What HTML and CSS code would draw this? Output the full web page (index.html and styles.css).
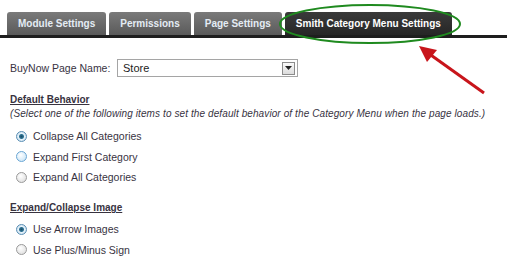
FILE: index.html
```html
<!DOCTYPE html>
<html lang="en">
<head>
  <meta charset="UTF-8" />
  <title>Smith Category Menu Settings</title>
  <link rel="stylesheet" href="styles.css">
</head>
<body>
  <div class="page">
    <ul class="tabs">
      <li class="tab">Module Settings</li>
      <li class="tab">Permissions</li>
      <li class="tab">Page Settings</li>
      <li class="tab active">Smith Category Menu Settings</li>
    </ul>

    <div class="settings">
      <div class="field">
        <label for="buyNowPage">BuyNow Page Name:</label>
        <div class="select" id="buyNowPage">
          <span>Store</span>
          <span class="select-btn"><svg width="7" height="4" viewBox="0 0 7 4"><path d="M0 0h7L3.5 4z" fill="#222"/></svg></span>
        </div>
      </div>

      <h3 class="section-title">Default Behavior</h3>
      <p class="hint">(Select one of the following items to set the default behavior of the Category Menu when the page loads.)</p>
      <div class="options">
        <div class="option"><span class="radio checked"></span>Collapse All Categories</div>
        <div class="option"><span class="radio hover"></span>Expand First Category</div>
        <div class="option"><span class="radio"></span>Expand All Categories</div>
      </div>

      <h3 class="section-title second">Expand/Collapse Image</h3>
      <div class="options">
        <div class="option"><span class="radio checked"></span>Use Arrow Images</div>
        <div class="option"><span class="radio"></span>Use Plus/Minus Sign</div>
      </div>
    </div>

    <!-- annotation drawn over the screenshot -->
    <svg class="markup" width="507" height="110" viewBox="0 0 507 110">
      <ellipse cx="370" cy="24" rx="90" ry="19" fill="none" stroke="#1f8a1f" stroke-width="2"/>
      <line x1="484" y1="93" x2="428" y2="53" stroke="#c8151b" stroke-width="3"/>
      <path d="M419 46 L437 50 L427 62 Z" fill="#c8151b"/>
    </svg>
  </div>
</body>
</html>
```

FILE: styles.css
```css
* {
  margin: 0;
  padding: 0;
  box-sizing: border-box;
}
body {
  background: #ffffff;
  font-family: 'Liberation Sans', Arial, sans-serif;
  font-size: 11px;
  color: #38333f;
}
.page {
  position: relative;
  width: 507px;
  height: 271px;
  overflow: hidden;
}
.tabs {
  list-style: none;
  display: flex;
  gap: 3px;
  padding: 12px 0 0 7px;
  border-bottom: 3px solid #1e1e1e;
}
.tab {
  height: 23px;
  line-height: 23px;
  padding: 0 11px;
  color: #e4ecf4;
  font-weight: bold;
  font-size: 10px;
  background: linear-gradient(#7a7a7a, #5a5a5a);
  border-radius: 3px 3px 0 0;
}
.tab.active {
  background: linear-gradient(#3a3a3a, #262626);
  color: #ffffff;
}
.settings {
  padding: 21px 10px 0 10px;
}
.field {
  display: flex;
  align-items: center;
}
.field label {
  font-size: 10.5px;
  width: 107px;
  white-space: nowrap;
}
.select {
  width: 181px;
  height: 18px;
  border: 1px solid #a5a5a5;
  display: flex;
  align-items: center;
  justify-content: space-between;
  padding: 0 2px 0 5px;
  font-size: 11px;
  color: #222;
}
.select-btn {
  width: 13px;
  height: 13px;
  border: 1px solid #8c8c8c;
  background: linear-gradient(#fafafa, #dcdcdc);
  display: flex;
  align-items: center;
  justify-content: center;
}
.section-title {
  font-size: 10px;
  font-weight: bold;
  text-decoration: underline;
  margin-top: 16px;
  line-height: 13px;
}
.section-title.second {
  margin-top: 17px;
}
.hint {
  font-style: italic;
  font-size: 10px;
  letter-spacing: 0.1px;
  line-height: 15px;
}
.options {
  display: flex;
  flex-direction: column;
  gap: 6.5px;
  padding: 8px 0 0 6px;
}
.option {
  display: flex;
  align-items: center;
  gap: 6px;
  font-size: 10.5px;
  line-height: 14px;
}
.radio {
  width: 11px;
  height: 11px;
  border-radius: 50%;
  border: 1px solid #9a9a9a;
  background: radial-gradient(circle at 40% 35%, #ffffff, #d8d8d8);
}
.radio.hover {
  border-color: #6aa6d4;
  background: radial-gradient(circle at 40% 35%, #ffffff, #bfdff5);
}
.radio.checked {
  border-color: #5a8eb4;
  background: radial-gradient(circle, #1a4c66 0, #2e7394 2px, #e6f2fa 3px, #c4dced 5.5px);
}
.markup {
  position: absolute;
  left: 0;
  top: 0;
}
```
